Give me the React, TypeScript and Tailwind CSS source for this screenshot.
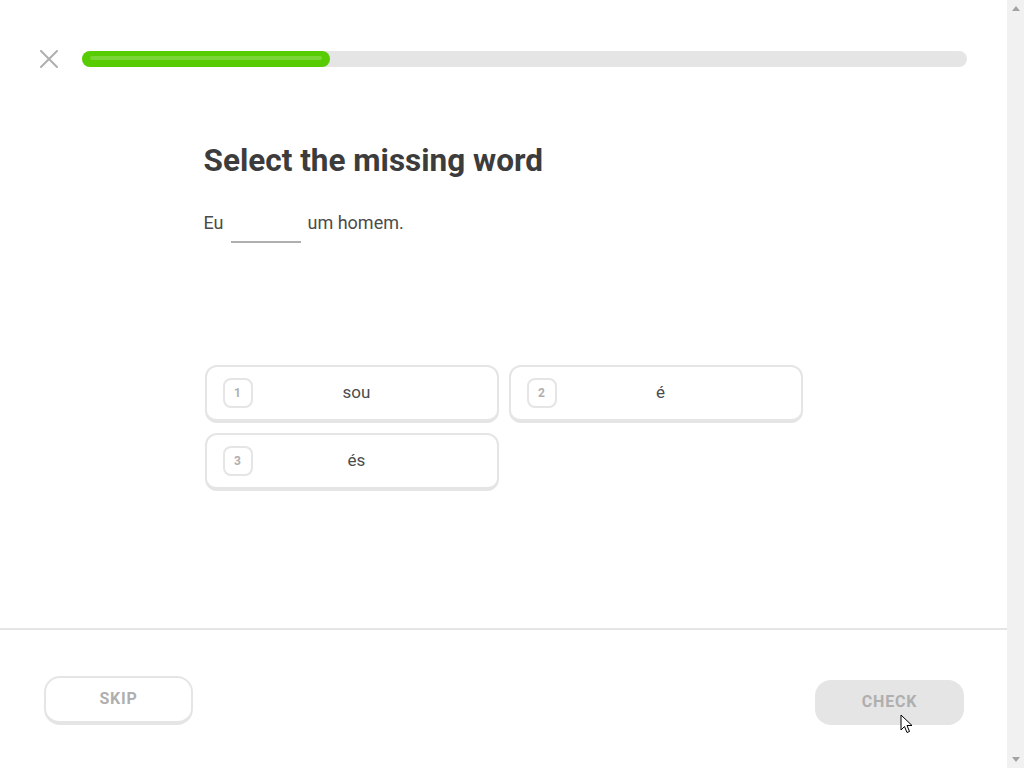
import React from "react";

function Option({ n, word }: { n: number; word: string }) {
  return (
    <div className="relative flex h-[58px] items-center rounded-[12px] border-2 border-b-4 border-[#e5e5e5] bg-white">
      <div className="absolute left-[16px] top-[11px] flex h-[30px] w-[30px] items-center justify-center rounded-[8px] border-2 border-[#e5e5e5] text-[12px] font-bold text-[#afafaf]">
        {n}
      </div>
      <div className="w-full pl-[10px] text-center text-[17px] text-[#4b4b4b]">{word}</div>
    </div>
  );
}

function Scrollbar() {
  return (
    <div className="flex w-[17px] shrink-0 flex-col items-center justify-between bg-[#f1f1f1] py-[6px]">
      <svg width="8" height="5" viewBox="0 0 8 5">
        <path d="M0 5 L4 0 L8 5 Z" fill="#a3a3a3" />
      </svg>
      <svg width="8" height="5" viewBox="0 0 8 5">
        <path d="M0 0 L8 0 L4 5 Z" fill="#a3a3a3" />
      </svg>
    </div>
  );
}

export default function App() {
  return (
    <div
      className="flex h-[768px] overflow-hidden bg-white"
      style={{ fontFamily: 'Roboto, "Noto Sans", sans-serif' }}
    >
      <div className="flex h-[768px] w-[1007px] shrink-0 flex-col">
        {/* header */}
        <div className="flex items-center pl-[40px] pr-[40px] pt-[50px]">
          <svg width="18" height="18" viewBox="0 0 18 18" className="shrink-0">
            <path d="M1 1 L17 17 M17 1 L1 17" stroke="#afafaf" strokeWidth="2" strokeLinecap="round" />
          </svg>
          <div className="ml-[24px] h-[16px] flex-1 rounded-full bg-[#e5e5e5]">
            <div className="relative h-[16px] w-[248px] rounded-full bg-[#58cc02]">
              <div className="absolute left-[8px] right-[8px] top-[5px] h-[4px] rounded-full bg-[#79d634]" />
            </div>
          </div>
        </div>

        {/* main */}
        <div className="mx-auto flex w-[600px] flex-1 flex-col">
          <h1 className="mt-[73px] text-[31.5px] font-bold leading-[40px] text-[#3c3c3c]">
            Select the missing word
          </h1>
          <div className="mt-[29px] flex h-[34px] items-start text-[18px] leading-[26px] text-[#4b4b4b]">
            <span>Eu</span>
            <span className="mx-[7px] box-content h-[31px] w-[70px] border-b-2 border-[#afafaf]" />
            <span>um homem.</span>
          </div>
          <div className="mt-[121px] grid grid-cols-2 gap-x-[10px] gap-y-[10px] px-[1px]">
            <Option n={1} word="sou" />
            <Option n={2} word="é" />
            <Option n={3} word="és" />
          </div>
        </div>

        {/* footer */}
        <div className="flex h-[140px] shrink-0 items-center justify-between border-t-2 border-[#e5e5e5] pl-[44px] pr-[43px] pb-[6px]">
          <div className="mt-[8px] flex h-[49px] w-[149px] items-center justify-center rounded-[16px] border-2 border-b-4 border-[#e5e5e5] bg-white text-[16px] font-bold tracking-[0.8px] text-[#afafaf]">
            SKIP
          </div>
          <div className="relative mt-[12px] flex h-[45px] w-[149px] items-center justify-center rounded-[16px] bg-[#e5e5e5] text-[16px] font-bold tracking-[0.8px] text-[#afafaf]">
            CHECK
            <svg width="14" height="21" viewBox="0 0 14 21" className="absolute left-[85px] top-[34px]">
              <path d="M1 1 L1 16 L4.5 12.5 L7 18.5 L9.5 17.5 L7 11.5 L12 11.5 Z" fill="#fff" stroke="#000" strokeWidth="1" strokeLinejoin="round" />
            </svg>
          </div>
        </div>
      </div>
      <Scrollbar />
    </div>
  );
}
